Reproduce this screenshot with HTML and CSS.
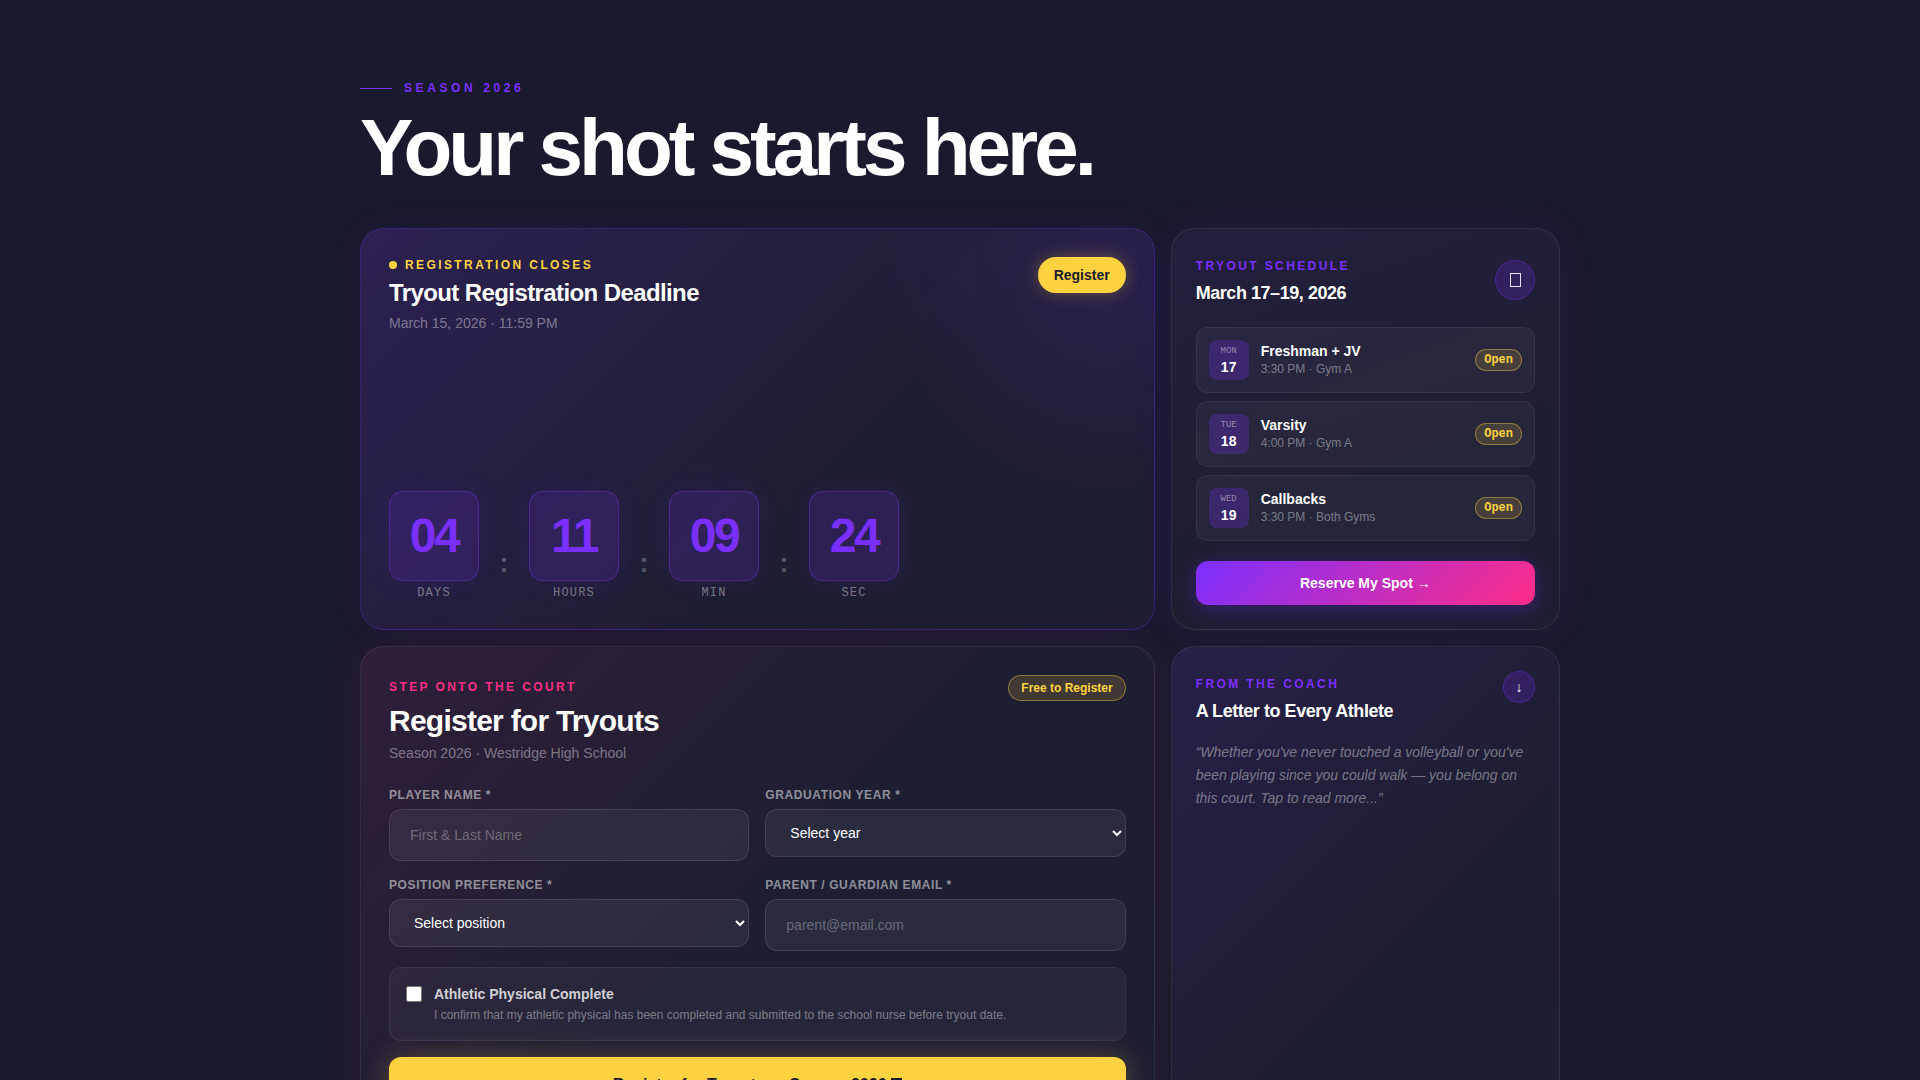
FILE: index.html
```html
<!DOCTYPE html>
<html lang="en">
<head>
    <meta charset="UTF-8">
    <meta name="viewport" content="width=device-width, initial-scale=1.0">
    <title>Tryouts 2026</title>
    <link rel="stylesheet" href="styles.css">
</head>
<body>
    <main class="container">
        <header class="page-header">
            <div class="season">Season 2026</div>
            <h1>Your shot starts here.</h1>
        </header>

        <div class="bento">
            <!-- Countdown -->
            <section class="card card-countdown">
                <div class="card-head">
                    <div>
                        <div class="eyebrow gold"><span class="dot"></span>Registration Closes</div>
                        <h2 class="deadline-title">Tryout Registration Deadline</h2>
                        <p class="sub">March 15, 2026 · 11:59 PM</p>
                    </div>
                    <button type="button" class="register-btn">Register</button>
                </div>
                <div class="countdown">
                    <div class="unit"><div class="digits">04</div><div class="unit-label">DAYS</div></div>
                    <div class="colon">:</div>
                    <div class="unit"><div class="digits">11</div><div class="unit-label">HOURS</div></div>
                    <div class="colon">:</div>
                    <div class="unit"><div class="digits">09</div><div class="unit-label">MIN</div></div>
                    <div class="colon">:</div>
                    <div class="unit"><div class="digits">24</div><div class="unit-label">SEC</div></div>
                </div>
            </section>

            <!-- Schedule -->
            <section class="card card-schedule">
                <div class="card-head schedule-head">
                    <div class="head-text">
                        <div class="eyebrow">Tryout Schedule</div>
                        <h3>March 17–19, 2026</h3>
                    </div>
                    <div class="round-icon">
                        <svg width="11" height="14" viewBox="0 0 11 14"><rect x="0.5" y="0.5" width="10" height="13" fill="none" stroke="#e8e4f0"/></svg>
                    </div>
                </div>
                <ul class="sessions">
                    <li class="session">
                        <div class="date"><span class="day">MON</span><span class="num">17</span></div>
                        <div class="info"><div class="name">Freshman + JV</div><div class="time">3:30 PM · Gym A</div></div>
                        <span class="status">Open</span>
                    </li>
                    <li class="session">
                        <div class="date"><span class="day">TUE</span><span class="num">18</span></div>
                        <div class="info"><div class="name">Varsity</div><div class="time">4:00 PM · Gym A</div></div>
                        <span class="status">Open</span>
                    </li>
                    <li class="session">
                        <div class="date"><span class="day">WED</span><span class="num">19</span></div>
                        <div class="info"><div class="name">Callbacks</div><div class="time">3:30 PM · Both Gyms</div></div>
                        <span class="status">Open</span>
                    </li>
                </ul>
                <button type="button" class="reserve-btn">Reserve My Spot →</button>
            </section>

            <!-- Registration form -->
            <section class="card card-form">
                <div class="card-head form-head">
                    <div>
                        <div class="eyebrow pink">Step Onto The Court</div>
                        <h2 class="form-title">Register for Tryouts</h2>
                        <p class="sub">Season 2026 · Westridge High School</p>
                    </div>
                    <span class="free-badge">Free to Register</span>
                </div>
                <form>
                    <div class="fields">
                        <div class="field">
                            <label for="playerName">Player Name *</label>
                            <input type="text" id="playerName" placeholder="First &amp; Last Name">
                        </div>
                        <div class="field">
                            <label for="gradYear">Graduation Year *</label>
                            <select id="gradYear"><option>Select year</option></select>
                        </div>
                        <div class="field">
                            <label for="position">Position Preference *</label>
                            <select id="position"><option>Select position</option></select>
                        </div>
                        <div class="field">
                            <label for="parentEmail">Parent / Guardian Email *</label>
                            <input type="email" id="parentEmail" placeholder="parent@email.com">
                        </div>
                    </div>
                    <div class="physical">
                        <input type="checkbox" id="physical">
                        <label for="physical">
                            <span class="physical-title">Athletic Physical Complete</span>
                            <span class="physical-text">I confirm that my athletic physical has been completed and submitted to the school nurse before tryout date.</span>
                        </label>
                    </div>
                    <button type="submit" class="submit-btn">Register for Tryouts — Season 2026 <svg width="11" height="14" viewBox="0 0 11 14"><rect x="1" y="1" width="9" height="12" fill="none" stroke="#1a1a2e" stroke-width="2"/></svg></button>
                </form>
            </section>

            <!-- Coach letter -->
            <section class="card card-coach">
                <div class="card-head">
                    <div class="head-text">
                        <div class="eyebrow">From The Coach</div>
                        <h3>A Letter to Every Athlete</h3>
                    </div>
                    <button type="button" class="round-icon small" aria-label="Read more">↓</button>
                </div>
                <p class="quote">“Whether you've never touched a volleyball or you've been playing since you could walk — you belong on this court. Tap to read more...”</p>
            </section>
        </div>
    </main>
</body>
</html>
```
FILE: styles.css
```css
* {
    box-sizing: border-box;
    margin: 0;
    padding: 0;
}
body {
    font-family: "Liberation Sans", Arial, sans-serif;
    background: #1a1a2e;
    color: #fff;
    line-height: 24px;
}
button, input, select {
    font-family: inherit;
}
.container {
    max-width: 1248px;
    margin: 0 auto;
    padding: 80px 24px;
}
.page-header {
    margin-bottom: 40px;
}
.season {
    display: flex;
    align-items: center;
    gap: 12px;
    font-size: 12px;
    font-weight: 700;
    line-height: 16px;
    letter-spacing: 0.3em;
    text-transform: uppercase;
    color: #7b2fff;
    margin-bottom: 12px;
}
.season::before {
    content: "";
    width: 32px;
    height: 1px;
    background: #7b2fff;
}
h1 {
    font-size: 80px;
    font-weight: 700;
    line-height: 80px;
    letter-spacing: -0.05em;
}

/* Cards */
.bento {
    display: grid;
    grid-template-columns: repeat(12, 1fr);
    gap: 16px;
}
.card {
    border: 1px solid rgba(255, 255, 255, 0.08);
    border-radius: 24px;
    overflow: hidden;
}
.card-countdown {
    grid-column: span 8;
    display: flex;
    flex-direction: column;
    justify-content: space-between;
    padding: 28px;
    border-color: rgba(123, 47, 255, 0.25);
    background:
        radial-gradient(circle at 94% 10%, rgba(123, 47, 255, 0.12), transparent 220px),
        linear-gradient(135deg, rgba(123, 47, 255, 0.15), transparent 60%),
        #1e1e33;
    box-shadow: 0 0 40px rgba(123, 47, 255, 0.05);
}
.card-schedule {
    grid-column: span 4;
    padding: 24px;
    background: linear-gradient(160deg, rgba(123, 47, 255, 0.05), transparent 60%), #1e1e33;
    box-shadow: 0 0 40px rgba(123, 47, 255, 0.08);
}
.card-form {
    grid-column: span 8;
    padding: 28px;
    background: linear-gradient(135deg, rgba(255, 45, 135, 0.08), transparent 50%), #1e1e33;
    box-shadow: 0 0 40px rgba(255, 45, 135, 0.08);
}
.card-coach {
    grid-column: span 4;
    padding: 24px;
    background: linear-gradient(135deg, rgba(123, 47, 255, 0.1), transparent 60%), #1e1e33;
}
.card-head {
    display: flex;
    justify-content: space-between;
    align-items: flex-start;
}
.head-text {
    padding-top: 5px;
}
.eyebrow {
    display: flex;
    align-items: center;
    gap: 8px;
    font-size: 12px;
    font-weight: 700;
    line-height: 16px;
    letter-spacing: 0.2em;
    text-transform: uppercase;
    color: #7b2fff;
}
.eyebrow.gold {
    color: #ffd23f;
}
.eyebrow.pink {
    color: #ff2d87;
}
.dot {
    width: 8px;
    height: 8px;
    border-radius: 50%;
    background: #ffd23f;
}
h2, h3 {
    letter-spacing: -0.025em;
}
.deadline-title {
    font-size: 24px;
    line-height: 28px;
    margin: 6px 0 4px;
}
.sub {
    font-size: 14px;
    color: rgba(255, 255, 255, 0.4);
}
h3 {
    font-size: 18px;
    line-height: 24px;
    margin-top: 7px;
}
.register-btn {
    height: 36px;
    padding: 0 16px;
    border: none;
    border-radius: 18px;
    background: #ffd23f;
    color: #1a1a2e;
    font-size: 14px;
    font-weight: 700;
    box-shadow: 0 0 16px rgba(255, 210, 63, 0.3);
    cursor: pointer;
}

/* Countdown */
.countdown {
    display: flex;
    align-items: flex-end;
    gap: 20px;
}
.digits {
    display: flex;
    align-items: center;
    justify-content: center;
    width: 90px;
    height: 90px;
    border: 1px solid rgba(123, 47, 255, 0.35);
    border-radius: 14px;
    background: rgba(123, 47, 255, 0.16);
    box-shadow: 0 0 24px rgba(123, 47, 255, 0.1);
    color: #7b2fff;
    font-size: 48px;
    font-weight: 700;
    letter-spacing: -0.05em;
}
.unit-label {
    margin-top: 4px;
    font-family: "Liberation Mono", monospace;
    font-size: 12px;
    line-height: 16px;
    letter-spacing: 0.1em;
    text-align: center;
    color: rgba(255, 255, 255, 0.4);
}
.colon {
    width: 10px;
    margin-bottom: 22px;
    font-size: 28px;
    font-weight: 700;
    line-height: 32px;
    text-align: center;
    color: rgba(255, 255, 255, 0.25);
}

/* Schedule */
.schedule-head {
    margin-bottom: 22px;
}
.schedule-head .round-icon {
    margin-top: 7px;
}
.round-icon {
    display: flex;
    align-items: center;
    justify-content: center;
    width: 40px;
    height: 40px;
    flex-shrink: 0;
    border: 1px solid rgba(123, 47, 255, 0.3);
    border-radius: 50%;
    background: rgba(123, 47, 255, 0.2);
    color: #fff;
}
.round-icon.small {
    width: 32px;
    height: 32px;
    font-size: 14px;
    cursor: pointer;
}
.sessions {
    display: flex;
    flex-direction: column;
    gap: 8px;
    list-style: none;
}
.session {
    display: flex;
    align-items: center;
    gap: 12px;
    padding: 12px;
    border: 1px solid rgba(255, 255, 255, 0.06);
    border-radius: 12px;
    background: rgba(255, 255, 255, 0.04);
}
.date {
    display: flex;
    flex-direction: column;
    align-items: center;
    justify-content: center;
    width: 40px;
    height: 40px;
    border-radius: 8px;
    background: rgba(123, 47, 255, 0.25);
}
.day {
    font-family: "Liberation Mono", monospace;
    font-size: 9px;
    line-height: 14px;
    color: rgba(255, 255, 255, 0.45);
}
.num {
    font-size: 14px;
    font-weight: 700;
    line-height: 18px;
}
.info {
    flex: 1;
}
.name {
    font-size: 14px;
    font-weight: 700;
    line-height: 18px;
}
.time {
    font-size: 12px;
    line-height: 18px;
    color: rgba(255, 255, 255, 0.4);
}
.status {
    padding: 0 8px;
    border: 1px solid rgba(255, 210, 63, 0.4);
    border-radius: 11px;
    background: rgba(255, 210, 63, 0.15);
    color: #ffd23f;
    font-family: "Liberation Mono", monospace;
    font-size: 12px;
    font-weight: 700;
    line-height: 20px;
}
.reserve-btn {
    width: 100%;
    height: 44px;
    margin-top: 20px;
    border: none;
    border-radius: 12px;
    background: linear-gradient(135deg, #7b2fff, #ff2d87);
    box-shadow: 0 4px 20px rgba(123, 47, 255, 0.3);
    color: #fff;
    font-size: 14px;
    font-weight: 700;
    cursor: pointer;
}

/* Form */
.form-head {
    margin-bottom: 22px;
}
.form-head .eyebrow {
    margin-top: 4px;
}
.form-title {
    font-size: 30px;
    line-height: 36px;
    margin: 8px 0 2px;
}
.free-badge {
    padding: 0 12px;
    border: 1px solid rgba(255, 210, 63, 0.4);
    border-radius: 13px;
    background: rgba(255, 210, 63, 0.15);
    color: #ffd23f;
    font-size: 12px;
    font-weight: 700;
    line-height: 24px;
}
.fields {
    display: grid;
    grid-template-columns: 1fr 1fr;
    align-items: start;
    gap: 16px;
    margin-bottom: 16px;
}
.field label {
    display: block;
    margin-bottom: 6px;
    font-size: 12px;
    font-weight: 700;
    line-height: 16px;
    letter-spacing: 0.05em;
    text-transform: uppercase;
    color: rgba(255, 255, 255, 0.5);
}
.field input,
.field select {
    display: block;
    width: 100%;
    border: 1px solid rgba(255, 255, 255, 0.1);
    border-radius: 12px;
    background: rgba(255, 255, 255, 0.06);
    color: #fff;
    font-size: 14px;
}
.field input {
    height: 52px;
    padding: 0 20px;
}
.field select {
    height: 48px;
    padding: 0 0 0 20px;
}
.field option {
    background: #1e1e33;
}
.field input::placeholder {
    color: rgba(255, 255, 255, 0.3);
}
.physical {
    display: flex;
    gap: 12px;
    padding: 16px;
    margin-bottom: 16px;
    border: 1px solid rgba(255, 255, 255, 0.06);
    border-radius: 12px;
    background: rgba(255, 255, 255, 0.04);
}
.physical input {
    width: 16px;
    height: 16px;
    margin-top: 2px;
    flex-shrink: 0;
}
.physical-title,
.physical-text {
    display: block;
}
.physical-title {
    margin-bottom: 2px;
    font-size: 14px;
    font-weight: 700;
    line-height: 20px;
    color: rgba(255, 255, 255, 0.8);
}
.physical-text {
    font-size: 12px;
    line-height: 18px;
    color: rgba(255, 255, 255, 0.4);
}
.submit-btn {
    width: 100%;
    height: 56px;
    border: none;
    border-radius: 12px;
    background: #ffd23f;
    box-shadow: 0 0 28px rgba(255, 210, 63, 0.25);
    color: #1a1a2e;
    font-size: 16px;
    font-weight: 700;
    cursor: pointer;
}
.submit-btn svg {
    vertical-align: -2px;
}

/* Coach */
.quote {
    margin-top: 18px;
    font-size: 14px;
    font-style: italic;
    line-height: 23px;
    color: rgba(255, 255, 255, 0.4);
}
```
